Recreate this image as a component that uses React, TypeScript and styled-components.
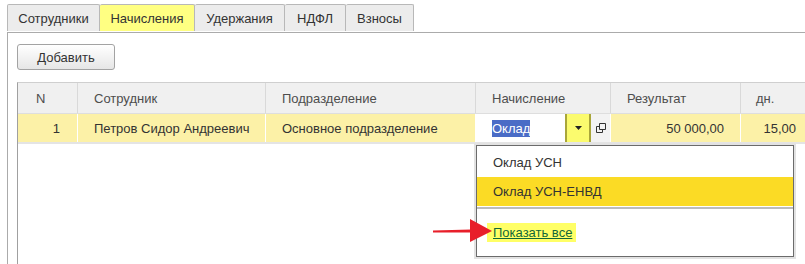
import styled, { createGlobalStyle } from "styled-components";

const Global = createGlobalStyle`
	html, body {
		margin: 0;
		padding: 0;
		background: #fff;
		overflow: hidden;
	}
	body {
		font-family: "Liberation Sans", Arial, sans-serif;
		font-size: 13px;
		color: #333;
	}
`;

const Page = styled.div`
	width: 805px;
	height: 264px;
	padding: 4px 0 0 7px;
	box-sizing: border-box;
	display: flex;
	flex-direction: column;
	overflow: hidden;
`;

const TabBar = styled.div`
	display: flex;
	height: 28px;
	border-bottom: 1px solid #ababab;
	margin-right: -7px;
`;

const Tab = styled.div<{ $active?: boolean; $first?: boolean; $width: number }>`
	display: flex;
	align-items: center;
	justify-content: center;
	box-sizing: border-box;
	width: ${(p) => p.$width}px;
	height: 27px;
	border: 1px solid #b8b8b8;
	border-bottom: none;
	border-left-width: ${(p) => (p.$first ? 1 : 0)}px;
	border-radius: 2px 2px 0 0;
	background: ${(p) => (p.$active ? "#ffff82" : "#ececec")};
	color: #333;
	white-space: nowrap;
`;

const Panel = styled.div`
	flex: 1;
	border-left: 1px solid #ababab;
	padding: 11px 0 0 9px;
	display: flex;
	flex-direction: column;
`;

const Button = styled.div`
	width: 96px;
	height: 24px;
	border: 1px solid #a3a3a3;
	border-radius: 3px;
	background: linear-gradient(#ffffff, #e6e6e6);
	display: flex;
	align-items: center;
	justify-content: center;
	color: #333;
`;

const TableWrap = styled.div`
	position: relative;
	margin-top: 12px;
	flex: 1;
	border-left: 1px solid #a0a0a0;
	border-top: 1px solid #cfcfcf;
`;

const Row = styled.div<{ $head?: boolean }>`
	display: grid;
	grid-template-columns: 60px 188px 210px 135px 130px 70px;
	height: ${(p) => (p.$head ? 30 : 28)}px;
	background: ${(p) => (p.$head ? "#f0f0f0" : "#fcf1a7")};
	border-bottom: ${(p) => (p.$head ? "1px solid #dedede" : "2px solid #e4e4e4")};
	color: ${(p) => (p.$head ? "#4d4d4d" : "#333")};
`;

const Cell = styled.div<{ $align?: "right"; $pad?: number; $line?: string }>`
	display: flex;
	align-items: center;
	justify-content: ${(p) => (p.$align === "right" ? "flex-end" : "flex-start")};
	padding: ${(p) => (p.$align === "right" ? `0 ${p.$pad ?? 14}px 0 0` : `0 0 0 ${p.$pad ?? 16}px`)};
	border-right: 1px solid ${(p) => p.$line ?? "#d9d9d9"};
	white-space: nowrap;
	overflow: hidden;
`;

const EditCell = styled.div`
	display: flex;
	border-right: 1px solid #fff;
`;

const Input = styled.div`
	flex: 1;
	background: #fff;
	display: flex;
	align-items: center;
	padding-left: 16px;
`;

const Selected = styled.span`
	background: #4a6cc6;
	color: #fff;
	line-height: 17px;
`;

const DropButton = styled.div`
	width: 22px;
	background: #fbfb6e;
	border-left: 2px solid #a9a63a;
	border-right: 2px solid #a9a63a;
	display: flex;
	align-items: center;
	justify-content: center;
`;

const OpenButton = styled.div`
	width: 19px;
	background: #f3f3f3;
	display: flex;
	align-items: center;
	justify-content: center;
`;

const Popup = styled.div`
	position: absolute;
	left: 458px;
	top: 62px;
	width: 316px;
	height: 108px;
	background: #fff;
	border: 1px solid #6b6b6b;
	box-shadow: 0 0 0 2px #e2e2e2;
	display: flex;
	flex-direction: column;
	padding-top: 2px;
	box-sizing: content-box;
`;

const Item = styled.div<{ $hot?: boolean }>`
	height: 29px;
	display: flex;
	align-items: center;
	padding-left: 16px;
	background: ${(p) => (p.$hot ? "#fbdb25" : "transparent")};
	color: #333;
`;

const Separator = styled.div`
	margin-top: 1px;
	border-top: 2px solid #bcbcbc;
`;

const LinkRow = styled.div`
	display: flex;
	padding: 14px 0 0 10px;
`;

const Link = styled.span`
	background: #ffff66;
	padding: 0 4px 0 6px;
	line-height: 19px;
	color: #11683a;
	text-decoration: underline;
`;

const Arrow = styled.svg`
	position: absolute;
	left: 415px;
	top: 136px;
`;

const tabs = [
	{ name: "Сотрудники", width: 93 },
	{ name: "Начисления", width: 95, active: true },
	{ name: "Удержания", width: 90 },
	{ name: "НДФЛ", width: 61 },
	{ name: "Взносы", width: 68 },
];

export default function App() {
	return (
		<>
			<Global />
			<Page>
				<TabBar>
					{tabs.map((t, i) => (
						<Tab key={t.name} $active={t.active} $first={i === 0} $width={t.width}>
							{t.name}
						</Tab>
					))}
				</TabBar>
				<Panel>
					<Button>Добавить</Button>
					<TableWrap>
						<Row $head>
							<Cell $pad={18}>N</Cell>
							<Cell>Сотрудник</Cell>
							<Cell>Подразделение</Cell>
							<Cell>Начисление</Cell>
							<Cell>Результат</Cell>
							<Cell $pad={15} $line="transparent">
								дн.
							</Cell>
						</Row>
						<Row>
							<Cell $align="right" $pad={17} $line="#fff">
								1
							</Cell>
							<Cell $line="#fff">Петров Сидор Андреевич</Cell>
							<Cell $line="#fff">Основное подразделение</Cell>
							<EditCell>
								<Input>
									<Selected>Оклад</Selected>
								</Input>
								<DropButton>
									<svg width="7" height="4" viewBox="0 0 7 4">
										<path d="M0 0h7L3.5 4z" fill="#222" />
									</svg>
								</DropButton>
								<OpenButton>
									<svg width="10" height="10" viewBox="0 0 10 10">
										<path
											d="M3.5 0.5h6v6h-6zM0.5 3.5h3M0.5 3.5v6h6v-3"
											fill="none"
											stroke="#333"
											strokeWidth="1"
										/>
									</svg>
								</OpenButton>
							</EditCell>
							<Cell $align="right" $pad={16} $line="#fff">
								50 000,00
							</Cell>
							<Cell $align="right" $pad={14} $line="transparent">
								15,00
							</Cell>
						</Row>
						<Popup>
							<Item>Оклад УСН</Item>
							<Item $hot>Оклад УСН-ЕНВД</Item>
							<Separator />
							<LinkRow>
								<Link>Показать все</Link>
							</LinkRow>
						</Popup>
						<Arrow width="60" height="24" viewBox="0 0 60 24">
							<path d="M0 11.5L38 10.5L38 13.5L0 13.5z" fill="#e81f2a" />
							<path d="M37 0L59 12L37 23z" fill="#e81f2a" />
						</Arrow>
					</TableWrap>
				</Panel>
			</Page>
		</>
	);
}
